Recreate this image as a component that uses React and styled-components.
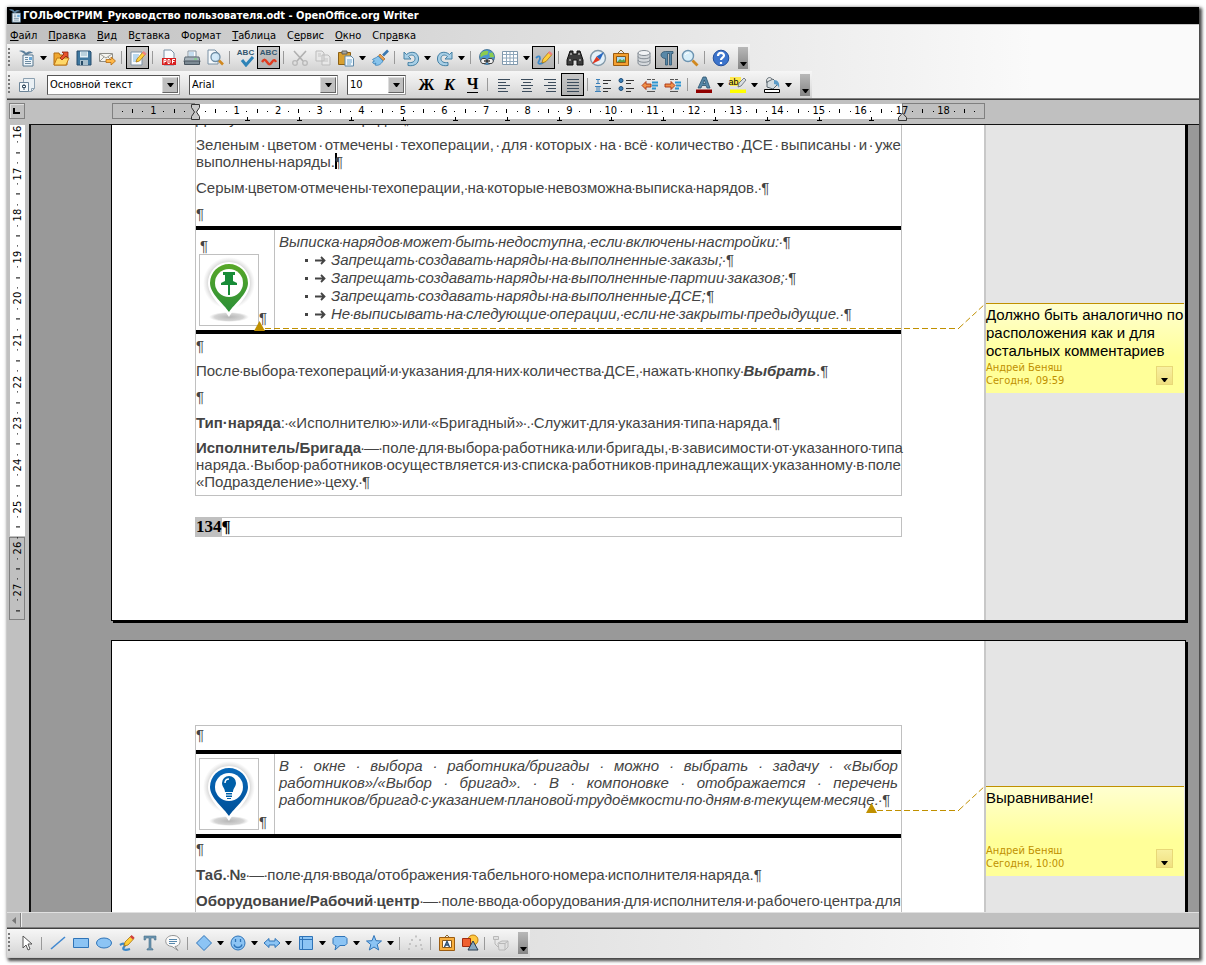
import React from "react";
import styled, { createGlobalStyle, css } from "styled-components";

const UI_FONT = '"DejaVu Sans Condensed", "DejaVu Sans", sans-serif';
const DOC_FONT = '"Liberation Sans", Arial, sans-serif';
const GOLD = "#c09000";

const GlobalStyle = createGlobalStyle`
  *, *::before, *::after { box-sizing: border-box; }
  html, body { margin: 0; background: #fff; }
  button, select { font: inherit; color: inherit; margin: 0; padding: 0; border: 0; background: none; }
`;

/* ---------- window ---------- */
const Desktop = styled.div`
  display: flex;
  height: 100vh;
  padding: 7px;
  font: 11px/14px ${UI_FONT};
  color: #000;
`;
const Window = styled.div`
  display: flex;
  flex-direction: column;
  flex: 1;
  min-width: 0;
  background: #c0c0c0;
  box-shadow: 2px 2px 3px 1px rgba(0, 0, 0, 0.7), 0 0 4px rgba(0, 0, 0, 0.25);
`;
const TitleBar = styled.header`
  display: flex;
  align-items: center;
  height: 17px;
  padding-left: 1px;
  background: #000;
  color: #fff;
  font-weight: bold;
  white-space: nowrap;
`;
const Chrome = styled.div`
  background: linear-gradient(90deg, #c0c0c0, #fafafa 86%);
`;
const MenuBar = styled.nav`
  display: flex;
  gap: 11px;
  height: 20px;
  padding: 2px 3px 0;
  border-top: 1px solid #c8c8c8;
`;
const MenuItem = styled.button`
  white-space: nowrap;
`;
const Toolbar = styled.div`
  display: flex;
  align-items: center;
  width: fit-content;
  height: ${(p) => (p.$tall ? 28 : 27)}px;
  padding-right: 2px;
  background: linear-gradient(#f6f6f6, #e6e6e6 50%, #d2d2d2);
`;
const Grip = styled.span`
  width: 2px;
  height: 20px;
  margin: 0 5px 0 1px;
  background: repeating-linear-gradient(#777 0 2px, transparent 2px 4px);
`;
const Tool = styled.button`
  display: flex;
  align-items: center;
  justify-content: center;
  width: 23px;
  height: 23px;
  ${(p) => p.$on && css`
    background: linear-gradient(#c8c8c8, #b0b0b0);
    outline: 1px solid #000;
    outline-offset: -1px;
  `}
`;
const DropTool = styled.button`
  display: flex;
  align-items: center;
  justify-content: center;
  width: 11px;
  height: 23px;
`;
const Sep = styled.span`
  width: 1px;
  height: 13px;
  margin: 0 4px 0 3px;
  background: #999;
`;
const Spacer = styled.span`
  width: 9px;
`;
const More = styled.button`
  display: flex;
  align-items: flex-end;
  justify-content: center;
  width: 10px;
  height: 22px;
  margin-left: 6px;
  padding-bottom: 3px;
  background: linear-gradient(#b8b8b8, #858585);
`;
const Letter = styled.span`
  font: ${(p) => (p.$italic ? "italic " : "")}bold 16px/16px "Liberation Serif", serif;
  border-bottom: ${(p) => (p.$line ? "1px solid #000" : "0")};
`;
const Combo = styled.label`
  display: flex;
  width: ${(p) => p.$width}px;
  height: 20px;
  margin-left: 9px;
  border: 1px solid;
  border-color: #555 #999 #999 #555;
  background: #fff;
`;
const ComboSelect = styled.select`
  appearance: none;
  flex: 1;
  min-width: 0;
  padding-left: 2px;
  outline: 0;
`;
const ComboArrow = styled.span`
  display: flex;
  align-items: center;
  justify-content: center;
  width: 16px;
  margin: 1px;
  background: #c0c0c0;
  border: 1px solid;
  border-color: #ddd #666 #666 #ddd;
`;
const HeaderEdge = styled.div`
  height: 2px;
  flex: none;
  background: linear-gradient(#808080 50%, #404040 50%);
`;

/* ---------- rulers ---------- */
const RulerRow = styled.div`
  display: flex;
  flex: none;
  align-items: flex-start;
  height: 24px;
  padding: 3px 214px 0 2px;
`;
const TabCorner = styled.button`
  display: flex;
  align-items: center;
  justify-content: center;
  width: 16px;
  height: 16px;
  margin-right: 87px;
  border: 1px solid #808080;
  box-shadow: inset 1px 1px 0 #e0e0e0;
`;
const Ruler = styled.div`
  display: grid;
  flex: 1;
  height: 18px;
  & > * { grid-area: 1 / 1; }
`;
const Bands = styled.div`
  display: flex;
  height: 16px;
`;
const Band = styled.span`
  ${(p) => (p.$page ? css`flex: 1; background: #fff; margin: 1px 0 0;` : css`width: 83px; border: 1px solid #808080;`)}
`;
const Marks = styled.div`
  display: grid;
  grid-template-columns: repeat(83, minmax(0, 1fr));
  height: 16px;
  padding: 0 5px;
`;
const Mark = styled.span`
  display: flex;
  align-items: center;
  justify-content: center;
  white-space: nowrap;
  font: 11px/16px ${UI_FONT};
  &::before {
    content: "";
    width: ${(p) => (p.$kind === "half" || p.$kind === "dot" ? 1 : 0)}px;
    height: ${(p) => (p.$kind === "half" ? 4 : 1)}px;
    background: #000;
  }
`;
const TabStops = styled.div`
  display: flex;
  align-items: flex-end;
  padding-left: 86px;
  overflow: hidden;
`;
const TabStop = styled.span`
  display: flex;
  flex: none;
  justify-content: flex-end;
  width: 52px;
`;
const Indents = styled.div`
  display: flex;
  justify-content: space-between;
  align-items: flex-end;
  padding: 0 77px 0 78px;
`;
const Middle = styled.div`
  display: flex;
  flex: 1;
  min-height: 0;
`;
const SideRuler = styled.div`
  display: grid;
  align-content: start;
  width: 22px;
  padding-left: 2px;
  overflow: hidden;
  & > * { grid-area: 1 / 1; }
`;
const SideBands = styled.div`
  width: 16px;
`;
const SideBand = styled.div`
  height: ${(p) => p.$h}px;
  margin: ${(p) => (p.$page ? "1px 0 1px 1px" : "0")};
  background: ${(p) => (p.$page ? "#fff" : "none")};
  border: ${(p) => (p.$page ? "0" : "1px solid #808080")};
`;
const SideMarks = styled.div`
  display: grid;
  grid-template-rows: repeat(47, minmax(0, 1fr));
  width: 18px;
  height: 489px;
  margin-top: 3px;
`;
const SideMark = styled.span`
  display: flex;
  align-items: center;
  justify-content: center;
  writing-mode: vertical-rl;
  transform: rotate(180deg);
  font: 11px/18px ${UI_FONT};
  &::before {
    content: "";
    width: ${(p) => (p.$kind === "half" ? 4 : p.$kind === "dot" ? 1 : 0)}px;
    height: ${(p) => (p.$kind === "num" ? 0 : 1)}px;
    background: #000;
  }
`;

/* ---------- document ---------- */
const Canvas = styled.main`
  flex: 1;
  min-width: 0;
  padding: 0 13px 0 80px;
  overflow: hidden;
  background: #999;
  border-left: 2px solid #111;
  border-top: 1px solid #111;
`;
const Sheet = styled.article`
  position: relative;
  display: grid;
  grid-template-columns: minmax(0, 1fr) 201px;
  height: ${(p) => p.$h}px;
  margin-top: ${(p) => p.$top}px;
  border: 1px solid #000;
  background: #fff;
  box-shadow: 2px 2px 0 #000;
`;
const Paper = styled.div`
  display: flex;
  flex-direction: column;
  padding: ${(p) => p.$pad}px 82px 0 83px;
`;
const Frame = styled.div`
  border: 1px solid #c0c0c0;
  border-top: ${(p) => (p.$open ? "0" : "1px solid #c0c0c0")};
  padding-bottom: 5px;
  font: 15px/17px ${DOC_FONT};
  color: #444;
`;
const Para = styled.div`
  margin-bottom: ${(p) => p.$gap || 9}px;
`;
const TextLine = styled.div`
  display: flex;
  justify-content: ${(p) => (p.$justify ? "space-between" : "flex-start")};
  white-space: nowrap;
`;
const Dot = styled.span`
  display: flex;
  justify-content: center;
  width: 3px;
`;
const Footer = styled.div`
  display: flex;
  height: 20px;
  margin-top: 21px;
  border: 1px solid #c0c0c0;
  font: bold 17px/18px "Liberation Serif", serif;
`;
const Field = styled.span`
  background: #c0c0c0;
`;
const Caret = styled.span`
  width: 2px;
  height: 16px;
  margin-right: -2px;
  background: #000;
`;
const Note = styled.section`
  display: grid;
  grid-template-columns: 79px minmax(0, 1fr);
  height: ${(p) => p.$h}px;
  margin-bottom: ${(p) => p.$after}px;
  border-top: 4px solid #000;
  border-bottom: 4px solid #000;
`;
const NoteIcon = styled.div`
  display: flex;
  flex-direction: column;
  justify-content: flex-end;
  padding: 0 0 4px 3px;
  border-right: 1px solid #c0c0c0;
`;
const NoteMark = styled.div`
  padding-left: 1px;
`;
const PictureRow = styled.div`
  display: flex;
  align-items: flex-end;
`;
const Picture = styled.div`
  display: flex;
  width: 60px;
  height: 72px;
  border: 1px solid #c0c0c0;
`;
const NoteText = styled.div`
  padding: 3px 3px 0 4px;
  font-style: italic;
  line-height: ${(p) => p.$lh}px;
`;
const BulletLine = styled.div`
  display: flex;
  align-items: center;
  padding-left: 25px;
`;
const Bullet = styled.span`
  display: flex;
  width: 27px;
`;
const Margin = styled.aside`
  padding-top: ${(p) => p.$pad}px;
  background: #e5e5e5;
  border-left: 2px solid #c8c8c8;
`;
const Comment = styled.section`
  display: flex;
  flex-direction: column;
  justify-content: space-between;
  height: 90px;
  margin-right: 1px;
  padding: 2px 0 6px;
  border-top: 1px solid ${GOLD};
  background: linear-gradient(#ffffd0, #ffff99 60%);
  font: 15px/18px ${DOC_FONT};
`;
const CommentFoot = styled.div`
  display: flex;
  justify-content: space-between;
  align-items: flex-end;
  padding-right: 11px;
  color: ${GOLD};
  font: 11px/13px ${UI_FONT};
`;
const CommentMenu = styled.button`
  display: flex;
  align-items: flex-end;
  justify-content: center;
  width: 17px;
  height: 19px;
  margin-bottom: 2px;
  padding-bottom: 2px;
  background: linear-gradient(#f8f0a0, #f0e080);
  border: 1px solid #e8d878;
`;
const Connector = styled.div`
  position: absolute;
  display: flex;
  align-items: flex-end;
  height: 27px;
  top: ${(p) => p.$top}px;
  right: 199px;
  ${(p) => (p.$left ? `left: ${p.$left}px;` : `width: ${p.$width}px;`)}
`;
const Dashes = styled.span`
  flex: 1;
  height: 1px;
  margin-bottom: 2px;
  background: repeating-linear-gradient(90deg, ${GOLD} 0 6px, transparent 6px 9px);
`;
const TailBox = styled.span`
  display: flex;
  margin-bottom: 2px;
`;

/* ---------- bottom ---------- */
const HScroll = styled.div`
  display: flex;
  flex: none;
  height: 15px;
  border-top: 1px solid #e0e0e0;
  background: #c0c0c0;
`;
const ScrollButton = styled.button`
  display: flex;
  align-items: center;
  justify-content: center;
  width: 14px;
  border-right: 1px solid #808080;
  box-shadow: 1px 0 0 #eee;
`;
const DrawBar = styled.div`
  flex: none;
  padding-bottom: 1px;
  background: linear-gradient(90deg, #c8c8c8, #fafafa 86%);
`;

/* ---------- icons ---------- */
const Svg = ({ children, s = 18 }) => (
  <svg width={s} height={s} viewBox="0 0 18 18" fill="none" aria-hidden="true">{children}</svg>
);
const Caret5 = ({ c = "#000" }) => (
  <svg width="7" height="4" viewBox="0 0 7 4" aria-hidden="true"><path d="M0 0h7L4 4H3z" fill={c} /></svg>
);
const page = (x = 4, y = 2, w = 10, h = 14) => (
  <path d={`M${x} ${y}h${w - 3}l3 3v${h - 3}h-${w}z`} fill="#f8fbfd" stroke="#7890a4" />
);
const B1 = "#8cc4f4";
const B2 = "#2f74b8";

const icons = {
  doc: <><path d="M1 2c4-1 6 0 7 2 2-2 5-2 7 0-3 0-5 1-7 3C6 4 4 3 1 2z" fill="#5b7f9c" /><path d="M5 6h10v11H5z" fill="#eef5fa" stroke="#54748c" /><path d="M7 8.500h3M7 10.500h3M7 12.500h6M7 14.500h6" stroke="#6d8ba1" /><path d="M11 8h3v3h-3z" fill="#6aa8d8" /></>,
  open: <><path d="M2 4h5l1 2h7v10H2z" fill="#f0a830" stroke="#b06a10" /><path d="M2 16l3-7h12l-3 7z" fill="#ffd868" stroke="#c07a18" /><path d="M8 9l4-4-2-2h6v6l-2-2-4 4z" fill="#e8542c" stroke="#8c2410" strokeWidth=".8" /></>,
  save: <><path d="M2 2h13l1 1v13H2z" fill="#3f78a0" stroke="#264d6c" /><path d="M5 2.500h8v6H5z" fill="#e4f0f6" /><path d="M6 4h6M6 6h6" stroke="#8fb3c6" /><path d="M5 11h8v5H5z" fill="#a9bfcc" /><path d="M6 12h2v4H6z" fill="#274b66" /></>,
  mail: <><path d="M1.500 4.500h13v8h-13z" fill="#f4f4f0" stroke="#8d8d88" /><path d="M2 5l6 4 6-4M2 12l4-4M14 12l-4-4" stroke="#9c9c96" /><path d="M8 10.500h5V8l4.500 4-4.500 4v-2.500H8z" fill="#ffb848" stroke="#b46a10" strokeWidth=".8" /></>,
  edit: <><path d="M2 3h11v13H2z" fill="#fafcff" stroke="#7f92a4" /><path d="M4 6h6M4 8h5M4 10h4M4 12h5" stroke="#78b4e0" /><path d="M7 13l1-3 6-7 2.500 2-6 7z" fill="#ffd23c" stroke="#a87410" strokeWidth=".8" /><path d="M13 4l1.500-2 3 2.500-1.500 2z" fill="#f08484" /></>,
  pdf: <>{page(4, 1, 10, 15)}<path d="M2 9h14v7H2z" fill="#d82020" /><path d="M4 14.500v-4h2v2H4M8 10.500v4h1.500l.5-1v-2l-.5-1zM12.500 14.500v-4H15M12.500 12.500h2" stroke="#fff" /></>,
  print: <><path d="M5 2h8v6H5z" fill="#fff" stroke="#8494a2" /><path d="M6 4h5M6 6h5" stroke="#8cbce0" /><path d="M2 8h14l1 5H1z" fill="#a8b4bc" stroke="#5e6c76" /><path d="M1.500 12h15v3.500h-15z" fill="#7c8a94" stroke="#48545e" /><path d="M11 10h3" stroke="#6fe070" /></>,
  preview: <>{page(2, 1, 10, 14)}<circle cx="9.500" cy="8" r="4.500" fill="#cfe8f8" fillOpacity=".9" stroke="#6d8ca4" strokeWidth="1.300" /><path d="M13 11.500l4 4" stroke="#d08820" strokeWidth="2.600" /></>,
  find: <><circle cx="7" cy="7" r="5.500" fill="#d8effa" stroke="#6c93b0" strokeWidth="1.400" /><path d="M4 6c1-2 3-2.500 4-2" stroke="#fff" /><path d="M11.500 11.500l5 5" stroke="#d08820" strokeWidth="2.800" /></>,
  check: <path d="M5 11l4 5 7-8" stroke="#2f84b8" strokeWidth="3" />,
  cut: <><path d="M3 2l9 10M15 2L6 12" stroke="#b0b0b0" strokeWidth="1.600" /><circle cx="4" cy="14" r="2.300" stroke="#b8b8b8" strokeWidth="1.300" /><circle cx="14" cy="14" r="2.300" stroke="#b8b8b8" strokeWidth="1.300" /></>,
  copy: <><path d="M2 2h6l2 2v8H2zM8 6h6l2 2v8H8z" fill="#e8e8e8" stroke="#bbb" /><path d="M4 5h3M4 7h3M10 10h4M10 12h4" stroke="#c4c4c4" /></>,
  paste: <><path d="M1.500 3.500h12v12h-12z" fill="#d8a030" stroke="#8c6014" /><path d="M5 2h5v3H5z" fill="#a8a8a0" stroke="#606058" /><path d="M8 7h6l2.500 2.500V17H8z" fill="#f2f8fc" stroke="#5e88a8" /><path d="M10 11h5M10 13h5M10 15h4" stroke="#6ca6d0" /></>,
  brush: <><path d="M17 1.500L12 6.500" stroke="#3a78b0" strokeWidth="2.600" /><path d="M9 5l5 5-2 1.500L7.500 7z" fill="#e8a050" stroke="#a06020" strokeWidth=".7" /><path d="M7 7l5 5c-2 3.500-5 5-8 4l1-2-2 1-1.500-2 2-1-2-1.500C3 9 5 9.500 7 7z" fill="#88c4ec" stroke="#3880b8" strokeWidth=".8" /></>,
  undo: <path d="M2 3v7h7L6.500 7.500C9 5 13 6 13 9.500S10 14 6 13.500v3C12 17.500 17 15 16.500 9 16 3 9 1.500 4.500 5.500z" fill="#a8cfe6" stroke="#4480a4" />,
  link: <><circle cx="9" cy="8" r="7.500" fill="#4c94d0" stroke="#35688c" strokeWidth=".8" /><path d="M2.500 5c2-3 6-4 8-2.500l-1 3-4 1-3 2zM11 4l3.500-.5L16.300 8 12 8.500z" fill="#8ccc50" /><path d="M5 9.500h2c2 0 2 5 0 5H5c-3 0-3-5 0-5zM11 9.500h2c3 0 3 5 0 5h-2c-2 0-2-5 0-5z" fill="#f0f0f0" stroke="#404040" /><path d="M6 12h6" stroke="#333" strokeWidth="1.400" /></>,
  table: <><path d="M1.500 2.500h15v13h-15z" fill="#fff" stroke="#8098ac" /><path d="M2 5.500h14M2 9h14M2 12.500h14M5.500 3v12M9 3v12M12.500 3v12" stroke="#90a8bc" /></>,
  draw: <><path d="M1 9c4-4 5 0 3 3s1 4 5 1" stroke="#3c88c8" strokeWidth="1.800" /><path d="M7 14l1-4 6-7 3 2.500-6 7z" fill="#ffcf3a" stroke="#a87410" strokeWidth=".8" /><path d="M13 4l1.500-2 3 2.500-1.500 2z" fill="#f08484" /></>,
  bino: <><path d="M4 2h3v3h4V2h3l3 9v5h-6v-5H7v5H1v-5z" fill="#3c3c3c" stroke="#111" /><path d="M3 11h2M4 5h2M12 5h2M13 11h2" stroke="#b0b0b0" strokeWidth="1.500" /></>,
  compass: <><circle cx="9" cy="9" r="7.500" fill="#e4f0f8" stroke="#8098a8" strokeWidth="1.400" /><path d="M15 3l-4 8L7.500 7.500z" fill="#2868c0" /><path d="M3 15l4.500-7.500L11 11z" fill="#e03820" /></>,
  gallery: <><path d="M6 4l3-3 3 3" stroke="#8c6a30" /><path d="M1.500 4.500h15v12h-15z" fill="#f4a030" stroke="#9c5c10" /><path d="M4.500 7.500h9v6h-9z" fill="#a8dcf4" stroke="#8c5a18" /><path d="M5 13l3-3 2 1.500L12 10l1.500 3z" fill="#5ca040" /></>,
  db: <><path d="M3 4v10c0 3.500 12 3.500 12 0V4z" fill="#d4d8dc" stroke="#848c94" /><ellipse cx="9" cy="4" rx="6" ry="2.500" fill="#f2f4f6" stroke="#848c94" /><path d="M3 7.500c0 3 12 3 12 0M3 11c0 3 12 3 12 0" stroke="#848c94" /></>,
  help: <><circle cx="9" cy="9" r="7.800" fill="#3c74cc" stroke="#24509c" /><path d="M6 7c0-4 6-4 6-.5 0 2-3 2.200-3 4.500M9 13v2" stroke="#fff" strokeWidth="2.200" /></>,
  styles: <><path d="M5.500 2.500h11v10l-3 3h-8z" fill="#eaf0f4" stroke="#8ca0b0" /><path d="M13.500 15.500v-3h3" stroke="#8ca0b0" /><path d="M1.500 6.500h9v9h-9z" fill="#f4f8fa" stroke="#6c8498" /><path d="M6 8v6" stroke="#344c60" /><path d="M4.500 9.500h3v2h-3z" fill="#fff" stroke="#344c60" /></>,
  left: <path d="M3 3.500h12M3 6.500h8M3 9.500h12M3 12.500h8M3 15.500h10" stroke="#3c4c5c" />,
  center: <path d="M3 3.500h12M5 6.500h8M3 9.500h12M5 12.500h8M4 15.500h10" stroke="#3c4c5c" />,
  right: <path d="M3 3.500h12M7 6.500h8M3 9.500h12M7 12.500h8M5 15.500h10" stroke="#3c4c5c" />,
  just: <path d="M3 3.500h12M3 6.500h12M3 9.500h12M3 12.500h12M3 15.500h12" stroke="#3c4c5c" />,
  num: <><path d="M1 3.500h4M3 3v4M1 7.500h4M0 10.500h6M2 11v4M4 11v4M0 15.500h6" stroke="#3c80b8" /><path d="M8 4.500h8M8 7.500h5M8 12.500h8M8 15.500h5" stroke="#333" /></>,
  bul: <><circle cx="3" cy="4.500" r="2" fill="#3c80b8" stroke="#1c4c78" /><circle cx="3" cy="12.500" r="2" fill="#3c80b8" stroke="#1c4c78" /><path d="M8 4.500h8M8 7.500h5M8 12.500h8M8 15.500h5" stroke="#333" /></>,
  outdent: <><path d="M6 3.500h4M6 15.500h8M11 3.500h3" stroke="#555" /><path d="M11 6.500h6M11 9.500h6M11 12.500h4" stroke="#2c94d0" strokeWidth="1.800" /><path d="M1 9.500l4-4V8h5v3H5v2.500z" fill="#f09048" stroke="#a83010" strokeWidth=".9" /></>,
  indent: <><path d="M6 3.500h4M6 15.500h8M11 3.500h3" stroke="#555" /><path d="M11 6.500h6M12 9.500h5M11 12.500h4" stroke="#2c94d0" strokeWidth="1.800" /><path d="M11 9.500l-4-4V8H1v3h6v2.500z" fill="#f09048" stroke="#a83010" strokeWidth=".9" /></>,
  fontcolor: <><path d="M3 12L8 1h3l4 11h-3l-1-2.500H7L6 12zM8 7.500h2.500L9.300 4z" fill="#5888a8" stroke="#2c5470" strokeWidth=".8" /><path d="M1 13.500h16v3.500H1z" fill="#900000" /></>,
  hilite: <><path d="M1 1h11v9H1z" fill="#ffe84c" /><path d="M9 11l1-4 5-5 2 2-5 6z" fill="#d8dde2" stroke="#606870" strokeWidth=".8" /><path d="M1 13.500h16v3.500H1z" fill="#ff0" /></>,
  fill: <><path d="M4 6l6-3 5 5-5 5-6-2z" fill="#d4dce0" stroke="#5c6870" /><path d="M4 7c-2-5 3-7 5-4" stroke="#5c6870" /><path d="M11 4c4 0 6 3 5 8-1-3-3-4-5-4z" fill="#5c9cc8" /><path d="M1.500 13.500h15v3h-15z" fill="#fff" stroke="#000" /></>,
  pointer: <path d="M5 2v12l3-3 2 5 2-1-2-5h4z" fill="#fff" stroke="#555" />,
  line: <path d="M2 15L16 3" stroke="#4088d0" strokeWidth="1.600" />,
  rect: <path d="M1.500 4.500h15v9h-15z" fill={B1} stroke={B2} />,
  ellipse: <ellipse cx="9" cy="9" rx="7.500" ry="5" fill={B1} stroke={B2} />,
  pencil: <><path d="M2 11c4-3 6 0 4 2s0 4 6 2" stroke="#3c88c8" strokeWidth="2.200" /><path d="M6 12l1-4 6-6 3 2.500-6 6.500z" fill="#ffcf3a" stroke="#a87410" strokeWidth=".8" /><path d="M12 3l1.500-2 3 2.500-1.500 2z" fill="#d04040" /></>,
  textT: <path d="M3 2h12v4h-1.500L13 4h-3v10l2 1v1H6v-1l2-1V4H5l-.5 2H3z" fill="#6c94b0" stroke="#48708c" strokeWidth=".6" />,
  balloon: <><path d="M9 1.500c9 0 9 10.500 2 11L14 16.500l-6-4C-1 12 0 1.500 9 1.500z" fill="#fafafa" stroke="#949494" /><path d="M5 5.500h8M5 7.500h8M5 9.500h6" stroke="#5888ac" /></>,
  diamond: <path d="M9 1.500L16.500 9 9 16.500 1.500 9z" fill={B1} stroke={B2} />,
  smile: <><circle cx="9" cy="9" r="7" fill={B1} stroke={B2} /><path d="M6.500 5v3M11.500 5v3M5 10.500c1 4 7 4 8 0" stroke={B2} strokeWidth="1.300" /></>,
  arrows: <path d="M1 9l5-4.500V7h6V4.500L17 9l-5 4.500V11H6v2.500z" fill={B1} stroke={B2} />,
  flow: <><path d="M2.500 2.500h13v13h-13z" fill={B1} stroke={B2} /><path d="M5.500 3v12M3 5.500h12" stroke={B2} /></>,
  callout: <path d="M4 2.500h10l2 2v5l-2 2H9L4 16l1-4.500H4l-2-2v-5z" fill={B1} stroke={B2} />,
  star: <path d="M9 1.500l2 5.200 5.500.3-4.300 3.500 1.500 5.500L9 13l-4.700 3 1.500-5.500L1.500 7 7 6.700z" fill={B1} stroke={B2} />,
  points: <path d="M8 1.500h2v2H8zM4 5h2v2H4zM12 5h2v2h-2zM2 9h2v2H2zM8 11h2v2H8zM13 10h2v2h-2zM1 14h2v2H1zM14 14h2v2h-2z" fill="#c4c4c4" />,
  frameA: <><path d="M6 4l3-3 3 3" stroke="#8c6a30" /><path d="M1.500 3.500h15v13h-15z" fill="#f8b040" stroke="#9c5c10" /><path d="M4.500 6.500h9v7h-9z" fill="#fff" stroke="#8c5a18" /><path d="M6.500 13L9 7.500l2.500 5.500M7.500 11h3" stroke="#284c70" strokeWidth="1.400" /></>,
  shapes: <><circle cx="12" cy="6" r="5" fill="#ffc840" stroke="#c08010" /><path d="M1.500 4.500h8v8h-8z" fill="#f06030" stroke="#a02c10" /><path d="M12 7l5 9H7z" fill="#88a8c0" stroke="#283c50" /></>,
  extrude: <><path d="M1.500 2.500h5v3h-5zM6 9l4-2h6v6l-3 3H7z" fill="#e0e0e0" stroke="#b8b8b8" /><path d="M3 6v4l3 3M7 9.500h6V16M13 9.500L16 7" stroke="#b8b8b8" /></>,
};

const AbcLabel = styled.span`
  font: bold 8px/8px "Liberation Sans", sans-serif;
  color: #34566e;
`;
const Stack = styled.span`
  display: grid;
  justify-items: center;
  & > * { grid-area: 1 / 1; }
`;
const HiliteLabel = styled.span`
  font: 9px/12px "Liberation Sans", sans-serif;
  justify-self: start;
`;
const special = {
  spell: <Stack><Svg>{icons.check}</Svg><AbcLabel>ABC</AbcLabel></Stack>,
  auto: <Stack><Svg><path d="M2 13c2-3 3-3 5 0s3 3 5 0 3-2 4 0" stroke="#e03c20" strokeWidth="2.400" /></Svg><AbcLabel>ABC</AbcLabel></Stack>,
  redo: <Svg><g transform="matrix(-1 0 0 1 18 0)">{icons.undo}</g></Svg>,
  pil: <Svg><path d="M15 2.500H7.500c-6 0-6 7 0 7V16H9.500V4.500h2V16h2V4.500H15z" fill="#5888a8" stroke="#2c5470" strokeWidth=".8" /></Svg>,
  hilite: <Stack><Svg>{icons.hilite}</Svg><HiliteLabel>ab</HiliteLabel></Stack>,
  bold: <Letter>Ж</Letter>,
  ital: <Letter $italic>К</Letter>,
  under: <Letter $line>Ч</Letter>,
};

/* tokens: name = tool, name! = pressed tool, ">" = arrow, "|" = separator */
const Tools = ({ items }) =>
  items.split(" ").map((t, i) => {
    if (t === "|") return <Sep key={i} />;
    if (t === ">") return <DropTool key={i} aria-label="Ещё"><Caret5 /></DropTool>;
    const name = t.replace("!", "");
    return (
      <Tool key={i} $on={t.endsWith("!")} aria-label={name}>
        {special[name] || <Svg>{icons[name]}</Svg>}
      </Tool>
    );
  });

const Select = ({ label, value, width }) => (
  <Combo $width={width}>
    <ComboSelect aria-label={label} defaultValue={value}><option>{value}</option></ComboSelect>
    <ComboArrow><Caret5 /></ComboArrow>
  </Combo>
);

const menu = [["", "Ф", "айл"], ["", "П", "равка"], ["", "В", "ид"], ["В", "с", "тавка"], ["Фо", "р", "мат"], ["", "Т", "аблица"], ["С", "е", "рвис"], ["", "О", "кно"], ["Спр", "а", "вка"]];

const markKind = (n) => (n % 4 === 0 ? "num" : n % 2 === 0 ? "half" : "dot");

/* One line of the document: "·" stands for a space, "*" opens a bold word. */
const Line = ({ text, justify }) => {
  const words = text.split("·");
  return (
    <TextLine $justify={justify}>
      {words.map((w, i) => {
        const bold = w.startsWith("*");
        return (
          <React.Fragment key={i}>
            {i > 0 && <Dot>·</Dot>}
            {bold ? <b>{w.slice(1)}</b> : <span>{w}</span>}
          </React.Fragment>
        );
      })}
    </TextLine>
  );
};

const Pin = ({ id, from, to, children }) => (
  <svg width="58" height="70" viewBox="0 0 58 70" fill="none" aria-hidden="true">
    <defs>
      <linearGradient id={id} x1="0" y1="0" x2="0" y2="1"><stop offset="0" stopColor={from} /><stop offset="1" stopColor={to} /></linearGradient>
      <radialGradient id={id + "s"}><stop offset="0" stopColor="#777" stopOpacity=".9" /><stop offset=".72" stopColor="#888" stopOpacity=".6" /><stop offset="1" stopColor="#aaa" stopOpacity="0" /></radialGradient>
    </defs>
    <ellipse cx="29" cy="62" rx="20" ry="5" fill={`url(#${id}s)`} opacity=".6" />
    <circle cx="29" cy="28" r="26" fill={`url(#${id}s)`} opacity=".8" />
    <path d="M29 62C24 53 8 42 8 28a21 21 0 0 1 42 0c0 14-16 25-21 34z" fill="#fff" />
    <path d="M29 57C24 49 10 39 10 28a19 19 0 0 1 38 0c0 11-14 21-19 29z" fill={`url(#${id})`} />
    <circle cx="29" cy="28" r="14" fill="#fff" />
    {children}
  </svg>
);

const Tail = () => (
  <TailBox>
    <svg width="27" height="25" viewBox="0 0 27 25" aria-hidden="true"><path d="M0 24L26 0" stroke={GOLD} strokeDasharray="6 3" /></svg>
  </TailBox>
);
const Anchor = () => (
  <svg width="11" height="10" viewBox="0 0 11 10" aria-hidden="true"><path d="M5.500 0L11 10H0z" fill={GOLD} /></svg>
);

const CommentBox = ({ lines, time }) => (
  <Comment>
    <div>{lines.map((l) => <div key={l}>{l}</div>)}</div>
    <CommentFoot>
      <div>Андрей Беняш<br />Сегодня, {time}</div>
      <CommentMenu aria-label="Меню комментария"><Caret5 /></CommentMenu>
    </CommentFoot>
  </Comment>
);

const bullets = [
  "Запрещать·создавать·наряды·на·выполненные·заказы;· ¶",
  "Запрещать·создавать·наряды·на·выполненные·партии·заказов;· ¶",
  "Запрещать·создавать·наряды·на·выполненные·ДСЕ;¶",
  "Не·выписывать·на·следующие·операции,·если·не·закрыты·предыдущие.· ¶",
];

export default function App() {
  return (
    <Desktop>
      <GlobalStyle />
      <Window>
        <TitleBar>
          <Svg s={15}>{icons.doc}</Svg>
          ГОЛЬФСТРИМ_Руководство пользователя.odt - OpenOffice.org Writer
        </TitleBar>
        <Chrome>
          <MenuBar>
            {menu.map(([a, u, b]) => <MenuItem key={a + u + b}>{a}<u>{u}</u>{b}</MenuItem>)}
          </MenuBar>
          <Toolbar>
            <Grip />
            <Tools items="doc > open save mail | edit! | pdf print preview | spell auto! | cut copy paste > brush | undo > redo > | link table > draw! | bino compass gallery db pil! find | help" />
            <More aria-label="Параметры панели"><Caret5 /></More>
          </Toolbar>
          <Toolbar>
            <Grip />
            <Tools items="styles" />
            <Select label="Стиль" value="Основной текст" width={133} />
            <Select label="Шрифт" value="Arial" width={149} />
            <Select label="Размер" value="10" width={59} />
            <Spacer />
            <Tools items="bold ital under | left center right just! | num bul outdent indent | fontcolor > hilite > fill >" />
            <More aria-label="Параметры панели"><Caret5 /></More>
          </Toolbar>
        </Chrome>
        <HeaderEdge />
        <RulerRow>
          <TabCorner aria-label="Табуляция">
            <svg width="8" height="8" viewBox="0 0 8 8" aria-hidden="true"><path d="M1 1v5h6" stroke="#000" strokeWidth="2" fill="none" /></svg>
          </TabCorner>
          <Ruler>
            <Bands><Band /><Band $page /><Band /></Bands>
            <Marks>
              {Array.from({ length: 83 }, (_, i) => {
                const n = i + 1;
                const cm = Math.abs(n - 8) / 4;
                const kind = n === 8 ? "none" : markKind(n);
                return <Mark key={n} $kind={kind}>{kind === "num" ? cm : ""}</Mark>;
              })}
            </Marks>
            <TabStops>
              {Array.from({ length: 13 }, (_, i) => (
                <TabStop key={i}><svg width="5" height="4" viewBox="0 0 5 4" aria-hidden="true"><path d="M2 0h1v3h2v1H0V3h2z" /></svg></TabStop>
              ))}
            </TabStops>
            <Indents>
              <svg width="11" height="18" viewBox="0 0 11 18" aria-hidden="true"><path d="M1.500 1.500h8v3L6.500 9l3 4.500v3h-8v-3l3-4.500-3-4.500z" fill="#c8c8c8" stroke="#333" /></svg>
              <svg width="11" height="9" viewBox="0 0 11 9" aria-hidden="true"><path d="M1.500 8.500v-3l4-4.500 4 4.500v3z" fill="#c8c8c8" stroke="#333" /></svg>
            </Indents>
          </Ruler>
        </RulerRow>
        <Middle>
          <SideRuler>
            <SideBands><SideBand $page $h={411} /><SideBand $h={83} /></SideBands>
            <SideMarks>
              {Array.from({ length: 47 }, (_, i) => (
                <SideMark key={i} $kind={markKind(i)}>{i % 4 === 0 ? 16 + i / 4 : ""}</SideMark>
              ))}
            </SideMarks>
          </SideRuler>
          <Canvas>
            <Sheet $h={512} $top={-16}>
              <Paper $pad={0}>
                <Frame $open>
                  <Para><Line text="Доступны·остальные·наряды.¶" /></Para>
                  <Para>
                    <Line justify text="Зеленым·цветом·отмечены·техоперации,·для·которых·на·всё·количество·ДСЕ·выписаны·и·уже" />
                    <TextLine><span>выполнены</span><Dot>·</Dot><span>наряды.</span><Caret /><span>¶</span></TextLine>
                  </Para>
                  <Para><Line text="Серым·цветом·отмечены·техоперации,·на·которые·невозможна·выписка·нарядов.· ¶" /></Para>
                  <Para $gap={4}>¶</Para>
                  <Note $h={108} $after={3}>
                    <NoteIcon>
                      <NoteMark>¶</NoteMark>
                      <PictureRow>
                        <Picture>
                          <Pin id="green" from="#58a828" to="#2c9038">
                            <path d="M23 17h12v3h-2v6l4 2v2H21v-2l4-2v-6h-2zM28 30h2v10h-2z" fill="#188c38" />
                          </Pin>
                        </Picture>
                        <span>¶</span>
                      </PictureRow>
                    </NoteIcon>
                    <NoteText $lh={18}>
                      <Line text="Выписка·нарядов·может·быть·недоступна,·если·включены·настройки:· ¶" />
                      {bullets.map((b) => (
                        <BulletLine key={b}>
                          <Bullet>
                            <svg width="22" height="9" viewBox="0 0 22 9" aria-hidden="true"><path d="M1 3h3v3H1z" fill="#444" /><path d="M11 4.500h9M17 1l3.500 3.500L17 8" stroke="#444" strokeWidth="1.800" fill="none" /></svg>
                          </Bullet>
                          <Line text={b} />
                        </BulletLine>
                      ))}
                    </NoteText>
                  </Note>
                  <Para $gap={8}>¶</Para>
                  <Para>
                    <TextLine><Line text="После·выбора·техопераций·и·указания·для·них·количества·ДСЕ,·нажать·кнопку·" /><i><b>Выбрать</b></i>.¶</TextLine>
                  </Para>
                  <Para>¶</Para>
                  <Para $gap={8}>
                    <TextLine><b>Тип·наряда</b><Line text=":·«Исполнителю»·или·«Бригадный»·.·Служит·для·указания·типа·наряда.¶" /></TextLine>
                  </Para>
                  <div>
                    <Line justify text="*Исполнитель/Бригада·—·поле·для·выбора·работника·или·бригады,·в·зависимости·от·указанного·типа" />
                    <Line justify text="наряда.·Выбор·работников·осуществляется·из·списка·работников·принадлежащих·указанному·в·поле" />
                    <Line text="«Подразделение»·цеху.· ¶" />
                  </div>
                </Frame>
                <Footer><Field>134</Field>¶</Footer>
              </Paper>
              <Margin $pad={193}>
                <CommentBox lines={["Должно быть аналогично по", "расположения как и для", "остальных комментариев"]} time="09:59" />
              </Margin>
              <Connector $top={194} $left={142}><Anchor /><Dashes /><Tail /></Connector>
            </Sheet>
            <Sheet $h={510} $top={19}>
              <Paper $pad={84}>
                <Frame>
                  <Para $gap={7}>¶</Para>
                  <Note $h={88} $after={2}>
                    <NoteIcon>
                      <PictureRow>
                        <Picture>
                          <Pin id="blue" from="#0868b8" to="#005098">
                            <path d="M29 17a7 7 0 0 1 7 7c0 4-3 5-3 9h-8c0-4-3-5-3-9a7 7 0 0 1 7-7zM26 34h6v1.500h-6zM26 36.500h6V38h-6zM27 39h4v1h-4z" fill="#0060a8" />
                            <path d="M25 24c0-2 1-4 4-4" stroke="#fff" strokeWidth="1.500" />
                          </Pin>
                        </Picture>
                        <span>¶</span>
                      </PictureRow>
                    </NoteIcon>
                    <NoteText $lh={17}>
                      <Line justify text="В·окне·выбора·работника/бригады·можно·выбрать·задачу·«Выбор" />
                      <Line justify text="работников»/«Выбор·бригад».·В·компоновке·отображается·перечень" />
                      <Line text="работников/бригад·с·указанием·плановой·трудоёмкости·по·дням·в·текущем·месяце.· ¶" />
                    </NoteText>
                  </Note>
                  <Para>¶</Para>
                  <Para><Line text="*Таб.·*№·—·поле·для·ввода/отображения·табельного·номера·исполнителя·наряда.¶" /></Para>
                  <Line justify text="*Оборудование/Рабочий·*центр·—·поле·ввода·оборудования·для·исполнителя·и·рабочего·центра·для" />
                </Frame>
              </Paper>
              <Margin $pad={145}>
                <CommentBox lines={["Выравнивание!"]} time="10:00" />
              </Margin>
              <Connector $top={145} $width={120}><Anchor /><Dashes /><Tail /></Connector>
            </Sheet>
          </Canvas>
        </Middle>
        <HScroll>
          <ScrollButton aria-label="Влево"><svg width="4" height="7" viewBox="0 0 4 7" aria-hidden="true"><path d="M4 0v7L0 3.500z" fill="#777" /></svg></ScrollButton>
        </HScroll>
        <HeaderEdge />
        <DrawBar>
          <Toolbar $tall>
            <Grip />
            <Tools items="pointer | line rect ellipse pencil textT balloon | diamond > smile > arrows > flow > callout > star > | points | frameA shapes | extrude" />
            <More aria-label="Параметры панели"><Caret5 /></More>
          </Toolbar>
        </DrawBar>
      </Window>
    </Desktop>
  );
}
